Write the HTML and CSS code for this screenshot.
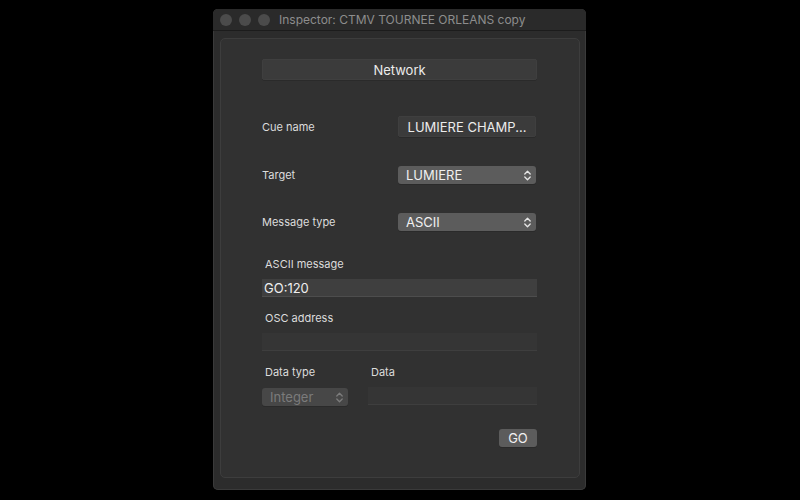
FILE: index.html
```html
<!DOCTYPE html>
<html>
<head>
<meta charset="utf-8">
<link rel="stylesheet" href="styles.css">
</head>
<body>
<div class="window">
  <div class="titlebar">
    <span class="light"></span><span class="light"></span><span class="light"></span>
    <span class="title">Inspector: CTMV TOURNEE ORLEANS copy</span>
  </div>
  <div class="content">
    <div class="panel">
      <div class="btn wide">Network</div>

      <div class="row r-cue">
        <span class="label">Cue name</span>
        <div class="btn ctl">LUMIERE CHAMP...</div>
      </div>

      <div class="row r-target">
        <span class="label">Target</span>
        <div class="popup ctl"><span>LUMIERE</span>
          <svg class="chev" width="7" height="11" viewBox="0 0 7 11"><path d="M0.8 4 L3.5 1.2 L6.2 4 M0.8 7 L3.5 9.8 L6.2 7" fill="none" stroke="#e6e6e6" stroke-width="1.3" stroke-linecap="round" stroke-linejoin="round"/></svg>
        </div>
      </div>

      <div class="row r-type">
        <span class="label">Message type</span>
        <div class="popup ctl"><span>ASCII</span>
          <svg class="chev" width="7" height="11" viewBox="0 0 7 11"><path d="M0.8 4 L3.5 1.2 L6.2 4 M0.8 7 L3.5 9.8 L6.2 7" fill="none" stroke="#e6e6e6" stroke-width="1.3" stroke-linecap="round" stroke-linejoin="round"/></svg>
        </div>
      </div>

      <div class="flabel l-ascii">ASCII message</div>
      <div class="field active">GO:120</div>

      <div class="flabel l-osc">OSC address</div>
      <div class="field"></div>

      <div class="datahead">
        <span class="flabel dt">Data type</span>
        <span class="flabel">Data</span>
      </div>
      <div class="datarow">
        <div class="popup disabled"><span>Integer</span>
          <svg class="chev" width="7" height="11" viewBox="0 0 7 11"><path d="M0.8 4 L3.5 1.2 L6.2 4 M0.8 7 L3.5 9.8 L6.2 7" fill="none" stroke="#7c7c7c" stroke-width="1.3" stroke-linecap="round" stroke-linejoin="round"/></svg>
        </div>
        <div class="field datafield"></div>
      </div>

      <div class="gorow"><div class="gobtn">GO</div></div>
    </div>
  </div>
</div>
</body>
</html>
```

FILE: styles.css
```css
html, body {
  margin: 0;
  padding: 0;
  background: #000;
  width: 800px;
  height: 500px;
  overflow: hidden;
  font-family: Inter, "Liberation Sans", sans-serif;
}
.window {
  width: 373px;
  height: 481px;
  margin: 9px 0 0 213px;
  background: #2c2c2c;
  border-radius: 5px;
  box-shadow: inset 0 0 0 1px #3a3a3a;
  box-sizing: border-box;
  display: flex;
  flex-direction: column;
}
.titlebar {
  height: 21px;
  flex: none;
  display: flex;
  align-items: center;
  padding-left: 7px;
  border-bottom: 1px solid #1c1c1c;
  background: #2a2a2a;
  border-radius: 5px 5px 0 0;
}
.light {
  width: 12px;
  height: 12px;
  border-radius: 50%;
  background: #4b4b4b;
  margin-right: 7px;
}
.title {
  margin-left: 2px;
  color: #8d8d8d;
  font-size: 12px;
  white-space: nowrap;
}
.content {
  flex: 1;
  padding: 7px 6px 12px 7px;
  display: flex;
}
.panel {
  flex: 1;
  background: #313131;
  border: 1px solid #3d3d3d;
  border-radius: 5px;
  padding: 20px 42px 0 41px;
  display: flex;
  flex-direction: column;
}
.btn {
  background: #3b3b3b;
  color: #ececec;
  font-size: 13px;
  border-radius: 3px;
  box-shadow: 0 1px 0 #2a2a2a, inset 0 0 0 0.5px #444;
  display: flex;
  align-items: center;
  justify-content: center;
}
.wide {
  height: 21px;
}
.row {
  display: flex;
  align-items: center;
}
.label {
  width: 136px;
  flex: none;
  color: #dcdcdc;
  font-size: 11px;
}
.ctl {
  width: 138px;
  flex: none;
}
.r-cue { margin-top: 36px; height: 21px; }
.r-cue .btn { height: 21px; }
.r-target { margin-top: 29px; height: 18px; }
.r-type { margin-top: 29px; height: 18px; }
.popup {
  height: 18px;
  background: #5c5c5c;
  color: #f0f0f0;
  border-radius: 3px;
  font-size: 13px;
  display: flex;
  align-items: center;
  justify-content: space-between;
  padding: 0 5px 0 8px;
  box-sizing: border-box;
  box-shadow: 0 1px 0 #2a2a2a;
}
.chev { display: block; }
.flabel {
  color: #dcdcdc;
  font-size: 11px;
  height: 14px;
  line-height: 14px;
  padding-left: 3px;
}
.l-ascii { margin-top: 26px; }
.l-osc { margin-top: 14px; }
.field {
  height: 18px;
  margin-top: 8px;
  background: #353535;
  border-bottom: 1px solid #3e3e3e;
  box-sizing: border-box;
  color: #eeeeee;
  font-size: 13px;
  line-height: 18px;
  padding-left: 2px;
}
.field.active {
  background: #3f3f3f;
  border-bottom-color: #4d4d4d;
}
.datahead {
  display: flex;
  margin-top: 14px;
}
.datahead .dt { width: 103px; }
.datarow {
  display: flex;
  align-items: flex-start;
  margin-top: 9px;
}
.popup.disabled {
  width: 86px;
  background: #474747;
  color: #7b7b7b;
}
.datafield {
  margin: -1px 0 0 20px;
  flex: 1;
}
.gorow {
  display: flex;
  justify-content: flex-end;
  margin-top: 23px;
}
.gobtn {
  width: 38px;
  height: 18px;
  background: #5c5c5c;
  color: #f0f0f0;
  font-size: 13px;
  border-radius: 3px;
  display: flex;
  align-items: center;
  justify-content: center;
  box-shadow: 0 1px 0 #2a2a2a;
}
```
